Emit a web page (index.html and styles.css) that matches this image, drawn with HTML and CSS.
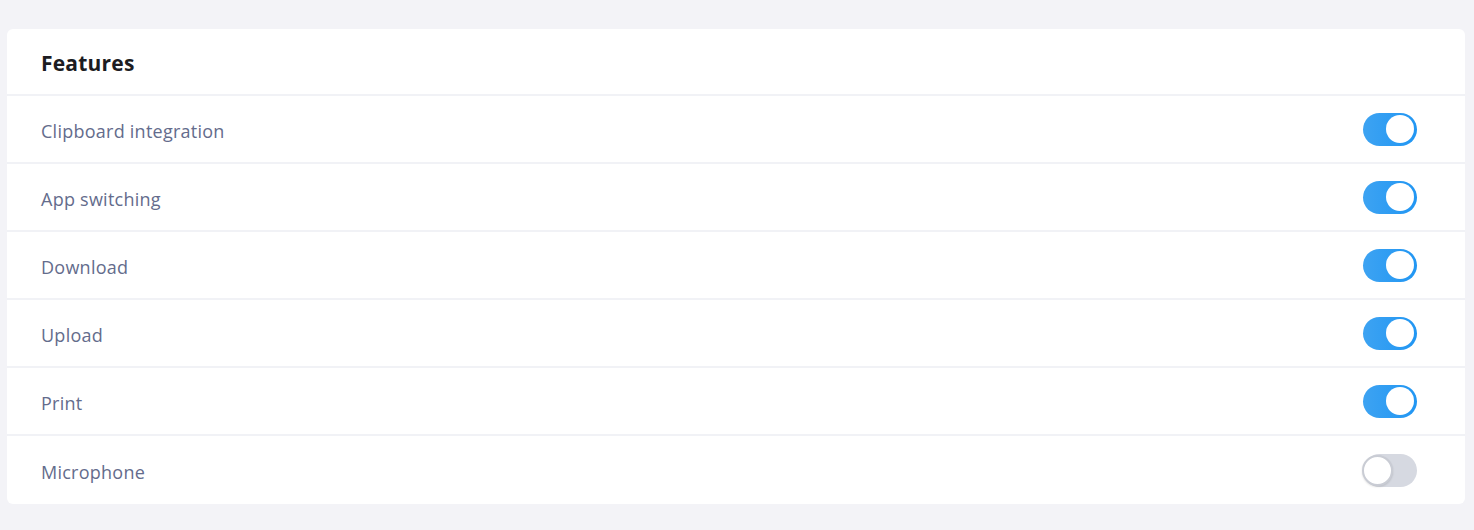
FILE: index.html
```html
<!DOCTYPE html>
<html>
<head>
<meta charset="utf-8">
<link rel="stylesheet" href="styles.css">
</head>
<body>
<div class="card">
  <div class="card-header">Features</div>
  <div class="row"><span class="label">Clipboard integration</span><span class="toggle on"><span class="knob"></span></span></div>
  <div class="row"><span class="label">App switching</span><span class="toggle on"><span class="knob"></span></span></div>
  <div class="row"><span class="label">Download</span><span class="toggle on"><span class="knob"></span></span></div>
  <div class="row"><span class="label">Upload</span><span class="toggle on"><span class="knob"></span></span></div>
  <div class="row"><span class="label">Print</span><span class="toggle on"><span class="knob"></span></span></div>
  <div class="row"><span class="label">Microphone</span><span class="toggle off"><span class="knob"></span></span></div>
</div>
</body>
</html>
```
FILE: styles.css
```css
html, body {
  margin: 0;
  padding: 0;
  background: #f3f3f7;
}
body {
  padding: 29px 9px 26px 7px;
  font-family: "Open Sans", Lato, sans-serif;
}
.card {
  background: #ffffff;
  border-radius: 6px;
  overflow: hidden;
}
.card-header {
  height: 67px;
  display: flex;
  align-items: center;
  padding-left: 34px;
  padding-top: 3px;
  font-size: 21px;
  font-weight: 700;
  letter-spacing: 0.2px;
  color: #1c1c22;
  border-bottom: 2px solid #f1f2f6;
  box-sizing: border-box;
}
.row {
  height: 68px;
  display: flex;
  align-items: center;
  justify-content: space-between;
  padding: 0 48px 0 34px;
  border-bottom: 2px solid #f1f2f6;
  box-sizing: border-box;
}
.row:last-child {
  border-bottom: none;
}
.label {
  padding-top: 4px;
  font-size: 18px;
  letter-spacing: 0.25px;
  color: #646c8c;
}
.toggle {
  width: 54px;
  height: 33px;
  border-radius: 17px;
  display: flex;
  align-items: center;
  box-sizing: border-box;
  padding: 0 3px;
}
.toggle.on {
  background: linear-gradient(90deg, #3da3f2 0%, #2196f3 100%);
  justify-content: flex-end;
}
.toggle.off {
  background: #d6d9e1;
  justify-content: flex-start;
  padding: 0;
}
.knob {
  width: 28px;
  height: 28px;
  border-radius: 50%;
  background: #ffffff;
}
.toggle.off .knob {
  width: 31px;
  height: 31px;
  margin-left: -1px;
  border: 2px solid #c9ccd4;
  box-sizing: border-box;
  box-shadow: 0 1px 2px rgba(0,0,0,0.12);
}
```
